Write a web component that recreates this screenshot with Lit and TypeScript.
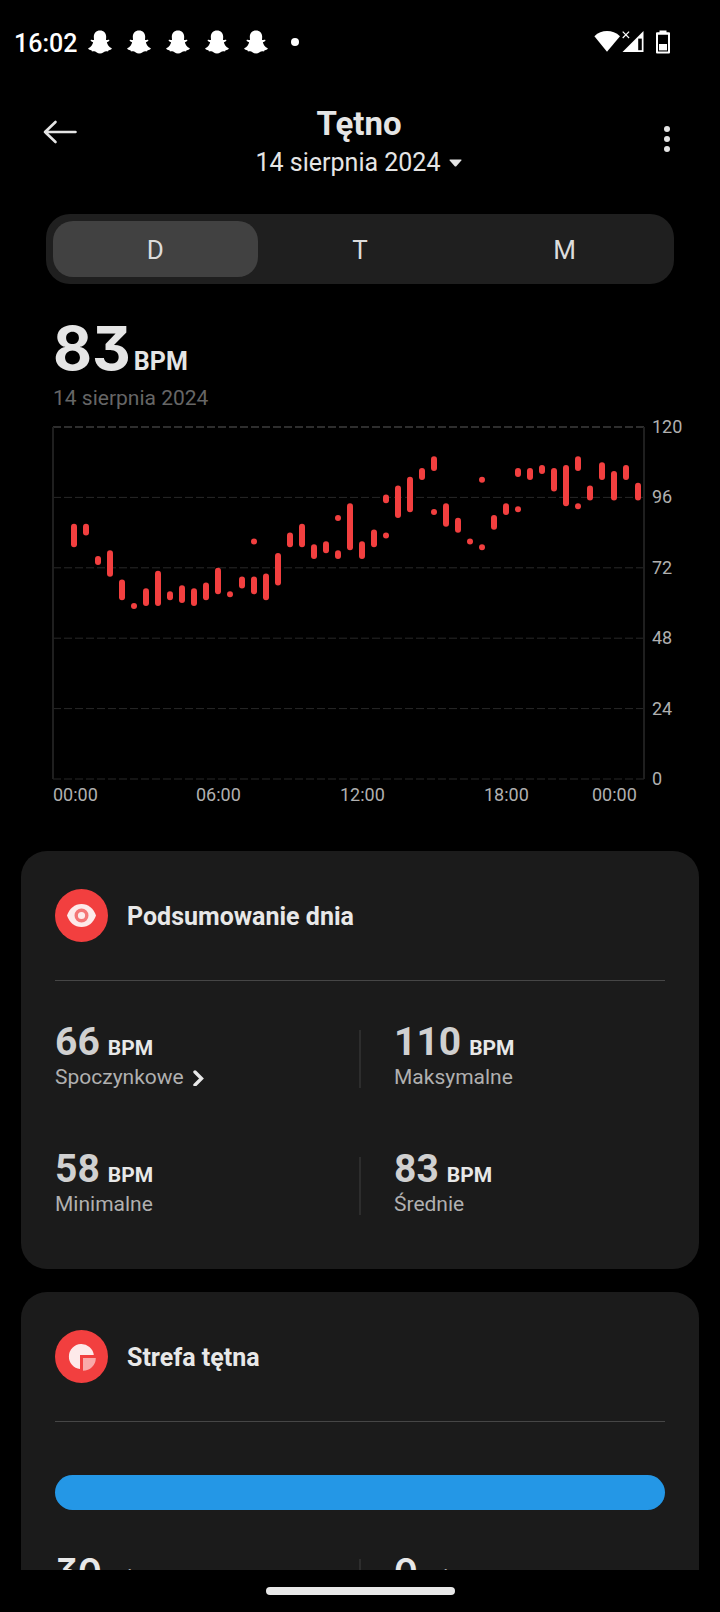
import { LitElement, html, svg, css } from "lit";
import { customElement, property, state } from "lit/decorators.js";
import { classMap } from "lit/directives/class-map.js";

/** One half-hour sample: slot index, highest and lowest value in BPM. */
type Range = [slot: number, high: number, low: number];

const RANGES: Range[] = [
  [0, 86, 80], [1, 86, 84], [2, 75, 74], [3, 77, 70], [4, 67, 62], [5, 59, 59],
  [6, 64, 60], [7, 70, 60], [8, 63, 62], [9, 65, 61], [10, 64, 60], [11, 66, 62],
  [12, 71, 64], [13, 63, 63], [14, 68, 66], [15, 68, 64], [15, 81, 81], [16, 69, 62],
  [17, 76, 67], [18, 83, 80], [19, 86, 80], [20, 79, 76], [21, 80, 78], [22, 77, 76],
  [22, 89, 89], [23, 93, 79], [24, 80, 76], [25, 84, 80], [26, 83, 83], [26, 96, 95],
  [27, 99, 90], [28, 102, 92], [29, 105, 103], [30, 109, 106], [30, 91, 91], [31, 93, 87],
  [32, 88, 85], [33, 81, 81], [34, 79, 79], [34, 102, 102], [35, 89, 86], [36, 93, 91],
  [37, 92, 92], [37, 105, 104], [38, 105, 103], [39, 106, 105], [40, 105, 99], [41, 106, 94],
  [42, 109, 106], [42, 93, 93], [43, 99, 96], [44, 107, 103], [45, 104, 96], [46, 106, 103],
  [47, 100, 96],
];
const LEVELS = [120, 96, 72, 48, 24, 0];
const HOURS = ["00:00", "06:00", "12:00", "18:00", "00:00"];

@customElement("status-bar")
class StatusBar extends LitElement {
  static styles = css`
    :host { display: flex; align-items: center; height: 84px; padding: 0 49px 0 14px; color: #fff; }
    .clock { font-size: 25px; font-weight: 500; line-height: 30px; padding-top: 3px; }
    .notes { display: flex; gap: 15px; margin-left: 11px; }
    .dot { width: 8px; height: 8px; border-radius: 50%; background: #fff; margin-left: 23px; }
    .system { display: flex; align-items: center; margin-left: auto; }
    .battery { margin-left: 10px; }
    svg { display: block; fill: #fff; }
  `;
  render() {
    return html`
      <span class="clock">16:02</span>
      <div class="notes">
        ${[0, 1, 2, 3, 4].map(() => html`<svg width="24" height="24" viewBox="0 0 24 24" aria-hidden="true">
          <path d="M12 .6C15.8.6 18.2 3.2 18.2 6.8L18 10C18.8 10.3 19.8 9.3 21 9.8C21.9 10.3 21.5 11.3 18.9 12.2C19.3 14.8 21 17 23.8 18.2C23.8 19.2 22.6 19.8 20.6 20.2L20 21.4C17.8 21.1 16.8 21.4 15.6 22.2C14.4 23 13.3 23.4 12 23.4C10.7 23.4 9.6 23 8.4 22.2C7.2 21.4 6.2 21.1 4 21.4L3.4 20.2C1.4 19.8.2 19.2.2 18.2C3 17 4.7 14.8 5.1 12.2C2.5 11.3 2.1 10.3 3 9.8C4.2 9.3 5.2 10.3 6 10L5.8 6.8C5.8 3.2 8.2.6 12 .6Z"/>
        </svg>`)}
      </div>
      <span class="dot"></span>
      <div class="system">
        <svg width="27" height="24" viewBox="0 0 27 24" aria-hidden="true"><path d="M.4 6.2C7.5-.6 18.5-.6 26 6.2L13 21.8Z"/></svg>
        <svg width="24" height="24" viewBox="0 0 24 24" aria-hidden="true">
          <path d="M22.500 1V22H1.500Z"/><path d="M17.200 8.600H20.800V20.200H17.200Z" fill="#000"/>
          <path d="M1.700 1.600L8.100 8M8.100 1.600L1.700 8" stroke="#fff" stroke-width="1.2"/>
        </svg>
        <svg class="battery" width="16" height="24" viewBox="0 0 16 24" aria-hidden="true">
          <path fill-rule="evenodd" d="M4.5.6H11.5V2.2H14A1 1 0 0 1 15 3.2V22.4A1 1 0 0 1 14 23.4H2A1 1 0 0 1 1 22.4V3.2A1 1 0 0 1 2 2.2H4.5ZM3 4.8V21.4H13V4.8Z"/>
          <path d="M4 14H12V20.4H4Z"/>
        </svg>
      </div>`;
  }
}

@customElement("heart-chart")
class HeartChart extends LitElement {
  static styles = css`
    :host { display: grid; grid-template-columns: 1fr 76px; row-gap: 5px; font-size: 18px; line-height: 22px; color: #b0b0b0; padding-left: 53px; }
    .plot { display: block; width: 100%; height: auto; overflow: visible; }
    .grid { stroke: #282828; stroke-dasharray: 8 3; stroke-width: 1; }
    .top { stroke: #2e2e2e; stroke-width: 2; }
    .side { stroke: #1f1f1f; stroke-width: 2; }
    .bars { stroke: #f23f3f; stroke-width: 6; stroke-linecap: round; }
    .levels { display: flex; flex-direction: column; justify-content: space-between; padding-left: 8px; }
    .level { height: 0; line-height: 0; }
    .hours { display: grid; grid-template-columns: 143fr 144fr 144fr 108fr 52fr; }
  `;
  render() {
    const y = (v: number) => ((120 - v) * 352) / 120;
    const x = (slot: number) => 21 + slot * 12;
    return html`
      <svg class="plot" viewBox="0 0 591 352" role="img" aria-label="Tętno">
        ${LEVELS.map((v) => svg`<line class=${classMap({ grid: true, top: v === 120 })} x1="0" x2="591" y1=${y(v)} y2=${y(v)} />`)}
        <path class="side" d="M0 0V352M591 0V352" />
        <g class="bars">
          ${RANGES.map(([s, hi, lo]) => svg`<line x1=${x(s)} x2=${x(s)} y1=${y(hi)} y2=${y(lo) + 0.01} />`)}
        </g>
      </svg>
      <div class="levels">${LEVELS.map((v) => html`<span class="level">${v}</span>`)}</div>
      <div class="hours">${HOURS.map((h) => html`<span>${h}</span>`)}</div>`;
  }
}

@customElement("info-card")
class InfoCard extends LitElement {
  @property() heading = "";
  static styles = css`
    :host { display: block; background: #1b1b1b; border-radius: 26px; padding: 38px 34px 50px; }
    .head { display: flex; align-items: center; gap: 19px; padding-bottom: 38px; border-bottom: 1px solid #464646; }
    h2 { margin: 0; padding-top: 2px; font-size: 25px; line-height: 30px; font-weight: 700; color: #e8e8e8; }
  `;
  render() {
    return html`<div class="head"><slot name="icon"></slot><h2>${this.heading}</h2></div><slot></slot>`;
  }
}

@customElement("app-root")
class AppRoot extends LitElement {
  @state() private tab = "D";

  static styles = css`
    :host { display: flex; flex-direction: column; height: 100vh; background: #000; color: #e5e5e5; font-family: Roboto, "Noto Sans", sans-serif; }
    button { font: inherit; color: inherit; background: none; border: 0; padding: 0; }
    .page { flex: 1; min-height: 0; overflow: auto; scrollbar-width: none; }
    .bar { display: grid; grid-template-columns: 80px 1fr 82px; padding: 17px 12px 0; height: 85px; }
    .titles { display: flex; flex-direction: column; align-items: center; }
    h1 { margin: 0; font-size: 33px; line-height: 46px; font-weight: 700; }
    .date { display: flex; align-items: center; gap: 9px; font-size: 25px; line-height: 32px; }
    .icon { display: flex; justify-content: center; align-items: center; align-self: start; }
    .back { padding: 19px 0 19px 16px; }
    .more { padding: 24px 0; }
    svg { display: block; }
    .tabs { display: grid; grid-template-columns: repeat(3, 1fr); margin: 28px 46px 0; padding: 7px; border-radius: 24px; background: #1f1f1f; }
    .tab { height: 56px; padding-top: 2px; border-radius: 20px; font-size: 26px; color: #dcdcdc; }
    .on { background: #414141; }
    .now { display: flex; align-items: baseline; gap: 3px; padding: 32px 53px 0; line-height: 64px; }
    .digits { font-family: Inter, Roboto, sans-serif; font-weight: 700; font-feature-settings: "cv09"; }
    .big { font-size: 60px; }
    .unit { font-size: 25px; line-height: 28px; font-weight: 700; }
    .day { padding: 6px 53px 0; font-size: 21px; line-height: 24px; color: #666; margin-bottom: 17px; }
    .cards { display: grid; gap: 23px; padding: 45px 21px; }
    .stats { display: grid; grid-template-columns: 1fr 2px 1fr; row-gap: 57px; padding-top: 41px; }
    .line { background: #2d2d2d; margin: 8px 0 4px; }
    .stat:nth-child(3n) { padding-left: 33px; }
    .value { display: flex; align-items: baseline; gap: 8px; font-size: 39px; line-height: 40px; font-weight: 700; color: #d0d0d0; }
    .bpm { font-size: 21px; line-height: 24px; color: #e8e8e8; }
    .label { display: flex; align-items: center; gap: 9px; font-size: 21px; line-height: 30px; color: #b0b0b0; }
    .zone { height: 35px; margin-top: 53px; border-radius: 18px; background: #2497e6; }
    .minutes { font-size: 36px; font-weight: 600; color: #e8e8e8; }
    .min { font-size: 20px; line-height: 24px; font-weight: 400; color: #b0b0b0; }
    .nav { display: flex; justify-content: center; align-items: center; height: 42px; }
    .handle { width: 189px; height: 8px; border-radius: 4px; background: #e8e8e8; }
  `;

  private stat(value: string, label: string, arrow = false) {
    return html`<div class="stat">
      <div class="value">${value}<span class="bpm">BPM</span></div>
      ${arrow
        ? html`<button class="label">${label}<svg width="12" height="18" viewBox="0 0 12 18" aria-hidden="true"><path d="M2 4L8.5 10.5L2 17" fill="none" stroke="#e8e8e8" stroke-width="3.4" stroke-linecap="round"/></svg></button>`
        : html`<div class="label">${label}</div>`}
    </div>`;
  }

  private zone(minutes: string) {
    return html`<div class="stat"><div class="value"><span class="digits minutes">${minutes}</span><span class="min">min</span></div></div>`;
  }

  render() {
    return html`
      <div class="page">
        <status-bar></status-bar>
        <header class="bar">
          <button class="icon back" aria-label="Wstecz">
            <svg width="36" height="24" viewBox="0 0 36 24" fill="none" stroke="#e5e5e5" stroke-width="2.6" stroke-linecap="round" stroke-linejoin="round"><path d="M33.5 12H3M13.5 2L3 12L13.5 22"/></svg>
          </button>
          <div class="titles">
            <h1>Tętno</h1>
            <button class="date">14 sierpnia 2024<svg width="13" height="8" viewBox="0 0 13 8" aria-hidden="true"><path d="M1 .5H12Q12.8.7 12.3 1.5L7.3 7.2Q6.5 7.9 5.7 7.2L.7 1.5Q.2.7 1 .5Z" fill="#e5e5e5"/></svg></button>
          </div>
          <button class="icon more" aria-label="Więcej">
            <svg width="8" height="28" viewBox="0 0 8 28" fill="#e5e5e5"><circle cx="4" cy="4" r="3"/><circle cx="4" cy="14" r="3"/><circle cx="4" cy="24" r="3"/></svg>
          </button>
        </header>
        <div class="tabs" role="tablist">
          ${["D", "T", "M"].map((t) => html`<button role="tab" aria-selected=${this.tab === t} class=${classMap({ tab: true, on: this.tab === t })} @click=${() => (this.tab = t)}>${t}</button>`)}
        </div>
        <div class="now"><span class="digits big">83</span><span class="unit">BPM</span></div>
        <div class="day">14 sierpnia 2024</div>
        <heart-chart></heart-chart>
        <main class="cards">
          <info-card heading="Podsumowanie dnia">
            <svg slot="icon" width="53" height="53" viewBox="0 0 53 53" aria-hidden="true">
              <circle cx="26.5" cy="26.5" r="26.5" fill="#f23f3f"/>
              <path d="M12 26.5C14.5 19.5 19.5 15 26.5 15S38.5 19.5 41 26.5C38.5 33.5 33.5 38 26.5 38S14.5 33.5 12 26.5Z" fill="#fdeaea"/>
              <circle cx="26.5" cy="26.5" r="5.3" fill="#fdeaea" stroke="#f47676" stroke-width="3.4"/>
            </svg>
            <div class="stats">
              ${this.stat("66", "Spoczynkowe", true)}<div class="line"></div>${this.stat("110", "Maksymalne")}
              ${this.stat("58", "Minimalne")}<div class="line"></div>${this.stat("83", "Średnie")}
            </div>
          </info-card>
          <info-card heading="Strefa tętna">
            <svg slot="icon" width="53" height="53" viewBox="0 0 53 53" aria-hidden="true">
              <circle cx="26.5" cy="26.5" r="26.5" fill="#f23f3f"/>
              <path d="M25 39A12.5 12.5 0 1 1 38.8 25H25Z" fill="#fdeaea"/>
              <path d="M28 28H40.8A12.8 12.8 0 0 1 28 40.8Z" fill="#f9a9a9"/>
            </svg>
            <div class="zone"></div>
            <div class="stats">${this.zone("30")}<div class="line"></div>${this.zone("0")}</div>
          </info-card>
        </main>
      </div>
      <footer class="nav"><div class="handle"></div></footer>`;
  }
}
